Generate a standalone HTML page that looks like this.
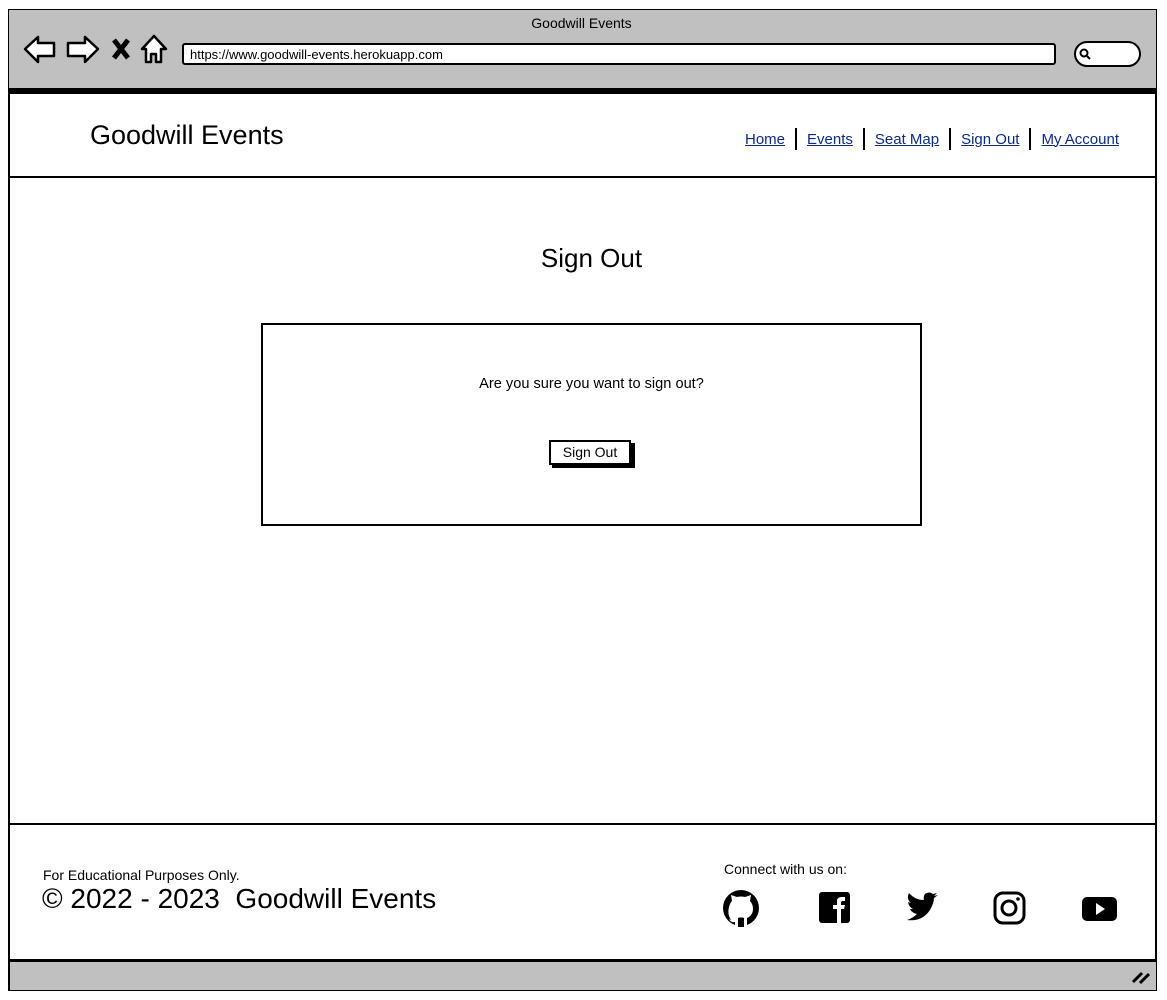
<!DOCTYPE html>
<html><head><meta charset="utf-8"><style>
*{margin:0;padding:0;box-sizing:border-box}
body{width:1167px;height:1000px;background:#fff;font-family:"Liberation Sans",sans-serif;color:#000;position:relative;overflow:hidden}
.a{position:absolute}
a{color:#0a2a8c;text-decoration:underline}
</style></head><body>
<div class="a" style="left:8px;top:9px;width:1149px;height:982px;border:2px solid #000"></div>
<div class="a" style="left:9px;top:10px;width:1147px;height:81px;background:#c0c0c0;border-bottom:3px solid #000"></div>
<div class="a" style="left:0;top:15px;width:1163px;text-align:center;font-size:14px">Goodwill Events</div>
<svg class="a" style="left:22px;top:33px" width="150" height="34" viewBox="0 0 150 34" fill="#fff" stroke="#000" stroke-width="2.5" stroke-linejoin="round">
<path d="M3 16 L16 4 L16 10 L32 10 L32 23 L16 23 L16 29 Z"/>
<path d="M76 16 L63 4 L63 10 L46 10 L46 23 L63 23 L63 29 Z"/>
<path d="M92 7 L106 25 M106 7 L92 25" stroke-width="5" fill="none"/>
<path d="M120 16 L132 3 L144 16 L139 16 L139 29 L134 29 L134 21 L129 21 L129 29 L124 29 L124 16 Z"/>
</svg>
<div class="a" style="left:182px;top:43px;width:874px;height:22px;background:#fff;border:2px solid #000;border-radius:3px;font-size:13px;padding:2px 6px">https://www.goodwill-events.herokuapp.com</div>
<div class="a" style="left:1074px;top:41px;width:67px;height:26px;background:#fff;border:2px solid #000;border-radius:13px"></div>
<svg class="a" style="left:1078px;top:47px" width="14" height="14"><circle cx="6" cy="6" r="3.5" fill="none" stroke="#000" stroke-width="2"/><path d="M9 9 L12 12" stroke="#000" stroke-width="2"/></svg>
<div class="a" style="left:8px;top:91px;width:1149px;height:3px;background:#000"></div>
<div class="a" style="left:8px;top:176px;width:1149px;height:2px;background:#000"></div>
<div class="a" style="left:90px;top:120px;font-size:27px">Goodwill Events</div>
<div class="a" style="left:745px;top:128px;font-size:15px;display:flex;align-items:center;gap:0">
<a>Home</a><span style="display:inline-block;width:2px;height:22px;background:#000;margin:0 10px"></span>
<a>Events</a><span style="display:inline-block;width:2px;height:22px;background:#000;margin:0 10px"></span>
<a>Seat Map</a><span style="display:inline-block;width:2px;height:22px;background:#000;margin:0 10px"></span>
<a>Sign Out</a><span style="display:inline-block;width:2px;height:22px;background:#000;margin:0 10px"></span>
<a>My Account</a></div>
<div class="a" style="left:0;top:243px;width:1183px;text-align:center;font-size:26px">Sign Out</div>
<div class="a" style="left:261px;top:323px;width:661px;height:203px;border:2px solid #000"></div>
<div class="a" style="left:261px;top:376px;width:661px;text-align:center;font-size:14.6px">Are you sure you want to sign out?</div>
<div class="a" style="left:552px;top:443px;width:83px;height:25px;background:#000"></div>
<div class="a" style="left:549px;top:440px;width:82px;height:25px;background:#fff;border:2px solid #000;font-size:14px;text-align:center;line-height:21px">Sign Out</div>
<div class="a" style="left:8px;top:823px;width:1149px;height:2px;background:#000"></div>
<div class="a" style="left:8px;top:959px;width:1149px;height:3px;background:#000"></div>
<div class="a" style="left:10px;top:962px;width:1146px;height:28px;background:#c0c0c0"></div>
<svg class="a" style="left:1130px;top:968px" width="22" height="18"><path d="M3 14 L12 5 M10 15 L19 6" stroke="#000" stroke-width="3"/></svg>
<div class="a" style="left:43px;top:867px;font-size:14px">For Educational Purposes Only.</div>
<div class="a" style="left:42px;top:883px;font-size:28px">© 2022 - 2023&nbsp; Goodwill Events</div>
<div class="a" style="left:724px;top:861px;font-size:14px">Connect with us on:</div>
<svg class="a" style="left:722px;top:888px" width="400" height="40" viewBox="0 0 400 40">
<circle cx="19" cy="20" r="18" fill="#000"/>
<path d="M9 32 Q5 26 7 19 Q8 15 10 13 L9 7 L15 9 Q19 8 23 9 L29 7 L28 13 Q31 16 31 21 Q31 26 27 29 L25 30 L25 38 L22 38 L22 30 Q19 29 16 30 L16 38 L13 38 L13 34 Q9 35 7 31 Z" fill="#fff"/>
<path d="M16 30 Q19 29 22 30 L22 39 L16 39 Z" fill="#000"/>
<rect x="97" y="4" width="31" height="31" rx="3" fill="#000"/>
<path d="M115 35 L115 21 L111 21 L111 17 L115 17 L115 13 Q115 9 120 9 L123 9 L123 13 L121 13 Q119 13 119 15 L119 17 L123 17 L122 21 L119 21 L119 35Z" fill="#fff"/>
<path d="M185 32 Q200 34 208 22 Q212 15 212 10 L216 7 L212 8 L215 5 L211 6 Q207 3 203 6 Q201 9 202 12 Q193 12 187 5 Q184 11 189 15 L186 14 Q187 19 191 21 L188 21 Q190 25 195 26 Q191 30 185 32Z" fill="#000"/>
<rect x="273" y="5" width="29" height="30" rx="8" fill="none" stroke="#000" stroke-width="3"/>
<circle cx="287" cy="20" r="7" fill="none" stroke="#000" stroke-width="3"/>
<circle cx="296" cy="11" r="1.8" fill="#000"/>
<rect x="360" y="9" width="35" height="24" rx="5" fill="#000"/>
<path d="M374 15 L383 21 L374 27Z" fill="#fff"/>
</svg>
</body></html>
